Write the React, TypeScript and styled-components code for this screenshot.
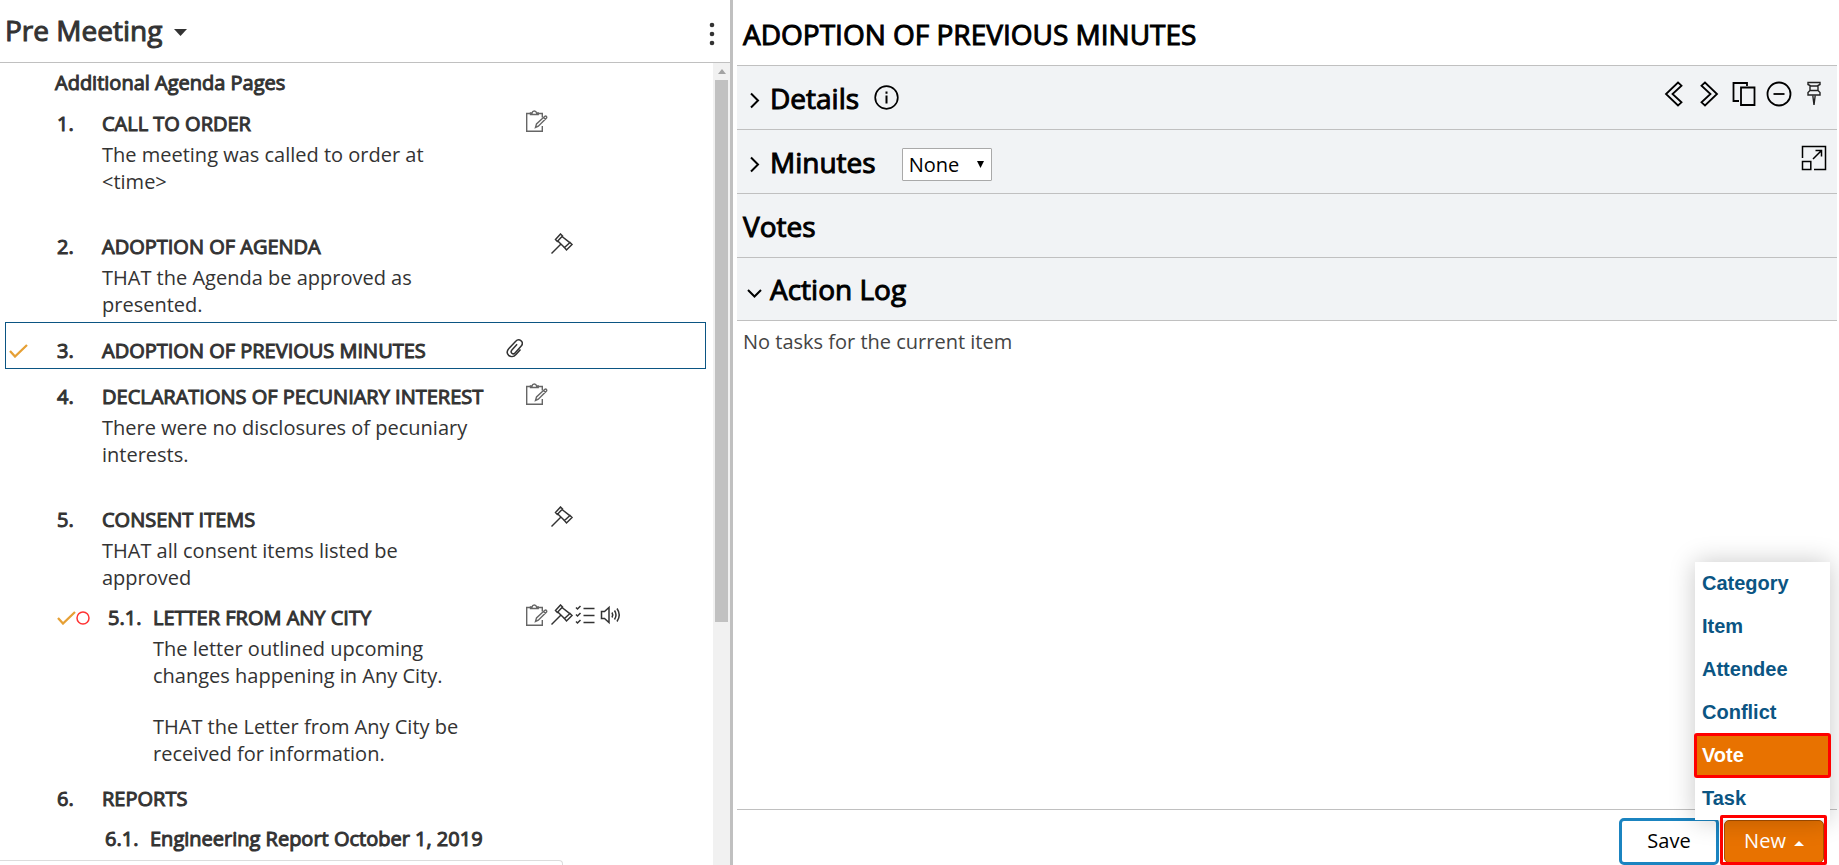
import React from 'react';
import styled, { createGlobalStyle, css } from 'styled-components';

const GlobalStyle = createGlobalStyle`
  *, *::before, *::after { box-sizing: border-box; }
  body {
    margin: 0;
    background: #fff;
    color: #333;
    font-family: 'Open Sans', 'Noto Sans', sans-serif;
    font-size: 20px;
    line-height: 27px;
  }
  button, select { font: inherit; color: inherit; }
  h1, h2, h3, p, ol, ul { margin: 0; padding: 0; font-weight: 400; font-size: inherit; }
  svg { display: block; }
`;

const emphasis = css`
  -webkit-text-stroke: 1px currentColor;
`;

const Page = styled.div`
  position: relative;
  display: grid;
  grid-template-columns: minmax(0, 733fr) minmax(0, 1106fr);
  height: 100vh;
  overflow: hidden;
`;

const AgendaPanel = styled.section`
  display: flex;
  flex-direction: column;
  min-height: 0;
  border-right: 3px solid #c0c0c0;
`;

const AgendaHeader = styled.header`
  flex: none;
  display: flex;
  align-items: center;
  justify-content: space-between;
  height: 63px;
  padding: 0 9px 0 5px;
  border-bottom: 1px solid #c0c0c0;
`;

const PlainButton = styled.button`
  display: flex;
  align-items: center;
  padding: 0;
  border: 0;
  background: none;
`;

const MeetingPicker = styled(PlainButton)`
  gap: 12px;
  padding-bottom: 2px;
  font-size: 28px;
  line-height: 38px;
  ${emphasis}

  svg { margin-top: 4px; }
`;

const MenuDots = styled(PlainButton)`
  padding-top: 6px;
`;

const AgendaBody = styled.div`
  flex: 1;
  display: flex;
  min-height: 0;
`;

const AgendaList = styled.ol`
  flex: 1;
  min-width: 0;
  overflow: hidden;
  padding: 6px 7px 0 5px;
  list-style: none;
`;

const ListHeading = styled.li`
  padding: 0 0 4px 50px;
  ${emphasis}
`;

const AgendaItem = styled.li<{ $level: number; $selected?: boolean }>`
  display: flex;
  align-items: flex-start;
  padding: ${(p) => (p.$level === 2 ? '9px 0 8px 52px' : '10px 0 4px')};
  ${(p) =>
    p.$selected &&
    css`
      margin-bottom: 4px;
      padding-top: 14px;
      border: 1px solid #0b5583;
    `}
`;

const Status = styled.span<{ $level: number; $selected?: boolean }>`
  flex: none;
  display: flex;
  align-items: center;
  height: 27px;
  min-width: ${(p) => (p.$level === 2 ? 48 : p.$selected ? 51 : 52)}px;
  padding: ${(p) => (p.$level === 2 ? '0 18px 0 0' : '0 0 0 3px')};
`;

const ItemNumber = styled.span`
  flex: none;
  width: 45px;
  ${emphasis}
`;

const ItemText = styled.div`
  flex: 1;
  min-width: 0;
`;

const ItemTitle = styled.h3`
  white-space: nowrap;
  ${emphasis}
`;

const ItemNote = styled.p<{ $spaced?: boolean }>`
  padding: 4px 16px 0 0;
  margin-bottom: ${(p) => (p.$spaced ? 24 : 0)}px;

  & + & { padding-top: 0; }
`;

const ItemIcons = styled.div`
  flex: none;
  display: grid;
  grid-template-columns: repeat(5, 25px);
  width: 206px;
  height: 22px;
  align-items: center;
`;

const IconSlot = styled.span<{ $slot: number }>`
  grid-row: 1;
  grid-column: ${(p) => p.$slot};
`;

const ScrollTrack = styled.div`
  flex: none;
  display: flex;
  flex-direction: column;
  align-items: center;
  width: 17px;
  background: #f1f1f1;
`;

const ScrollArrow = styled.span`
  display: flex;
  align-items: center;
  height: 17px;
`;

const ScrollThumb = styled.span`
  flex: 0.69 1 0;
  width: 13px;
  background: #c1c1c1;
`;

const DetailPanel = styled.main`
  display: flex;
  flex-direction: column;
  min-width: 0;
  padding: 0 2px 0 4px;
  color: #000;
`;

const DetailHeader = styled.header`
  flex: none;
  display: flex;
  align-items: center;
  height: 65px;
  padding: 3px 6px 0;
`;

const DetailTitle = styled.h1`
  font-size: 28px;
  line-height: 38px;
  white-space: nowrap;
  ${emphasis}
`;

const Section = styled.section`
  flex: none;
  display: flex;
  align-items: center;
  height: 64px;
  padding: 0 8px 0 6px;
  border-top: 1px solid #c0c0c0;
  background: #f1f3f5;

  &:last-of-type { height: 63px; }
`;

const SectionToggle = styled(PlainButton)`
  font-size: 28px;
  line-height: 38px;
  gap: 8px;
  color: #000;
  ${emphasis}

  svg { margin-top: 6px; }
`;

const SectionTitle = styled.h2`
  font-size: 28px;
  line-height: 38px;
  ${emphasis}
`;

const InfoButton = styled(PlainButton)`
  margin-left: 15px;
`;

const SelectWrap = styled.label`
  position: relative;
  margin: 6px 0 0 26px;

  svg {
    position: absolute;
    right: 8px;
    top: 13px;
    pointer-events: none;
  }
`;

const Select = styled.select`
  display: block;
  appearance: none;
  width: 90px;
  height: 33px;
  padding: 0 6px;
  border: 1px solid #a9a9a9;
  border-radius: 1px;
  background: #fff;
  color: #000;
`;

const Tools = styled.div`
  display: flex;
  align-items: center;
  margin: 0 -2px 8px auto;
`;

const ToolButton = styled(PlainButton)`
  width: 35px;
  height: 26px;
  justify-content: center;
`;

const LogText = styled.p`
  flex: 1;
  padding: 7px 6px;
  border-top: 1px solid #c0c0c0;
  color: #444;
`;

const Footer = styled.footer`
  flex: none;
  display: flex;
  justify-content: flex-end;
  align-items: flex-start;
  height: 56px;
  padding-right: 10px;
  border-top: 1px solid #c0c0c0;
`;

const SaveButton = styled.button`
  width: 100px;
  height: 47px;
  margin: 8px 1px 0 0;
  padding: 0 0 2px;
  border: 3px solid #1b84c0;
  border-radius: 5px;
  background: #fff;
  color: #000;
`;

const NewWrap = styled.div`
  position: relative;
  width: 107px;
  height: 50px;
  margin-top: 5px;
  padding: 5px 0 0 4px;

  &::after {
    content: '';
    position: absolute;
    inset: 0;
    z-index: 2;
    border: 3px solid #f00;
    border-radius: 2px;
    pointer-events: none;
  }
`;

const NewButton = styled.button`
  display: flex;
  align-items: center;
  justify-content: center;
  gap: 8px;
  width: 100px;
  height: 43px;
  padding: 0 0 2px;
  border: 1px solid #a85000;
  border-radius: 5px;
  background: #e87200;
  color: #fff;

  svg { margin-top: 6px; }
`;

const Menu = styled.ul`
  position: absolute;
  right: -3px;
  bottom: 45px;
  z-index: 1;
  width: 135px;
  list-style: none;
  background: #fff;
  box-shadow: 0 0 24px rgba(0, 0, 0, 0.22);
`;

const MenuButton = styled.button<{ $active?: boolean }>`
  display: block;
  width: 100%;
  height: 43px;
  padding: 0 7px;
  border: 0;
  background: #fff;
  color: #0b5583;
  font: bold 20px/27px 'Liberation Sans', Arial, sans-serif;
  text-align: left;
  ${(p) =>
    p.$active &&
    css`
      position: relative;
      background: #e87200;
      color: #fff;
      outline: 3px solid #f00;
      outline-offset: -2px;
      border-radius: 2px;
    `}
`;

const BrowserStatus = styled.div`
  position: absolute;
  left: 0;
  bottom: 0;
  width: 563px;
  height: 5px;
  border: solid #dcdcdc;
  border-width: 1px 1px 0 0;
  border-top-right-radius: 4px;
  background: #fff;
`;

const stroke = { fill: 'none', stroke: 'currentColor', strokeWidth: 1.5 } as const;

const CheckIcon = () => (
  <svg width="19" height="14" viewBox="0 0 19 14" fill="none" stroke="#e6a035" strokeWidth="2.300">
    <path d="M1 7l5 5.500L18 1" />
  </svg>
);

const CircleIcon = () => (
  <svg width="14" height="14" viewBox="0 0 14 14" fill="none" stroke="#f33" strokeWidth="1.500">
    <circle cx="7" cy="7" r="6" />
  </svg>
);

const ClipIcon = () => (
  <svg width="24" height="22" viewBox="0 0 24 22" {...stroke}>
    <path d="M21.500 12.500l-4.500 5c-2.500 2.700-5.500 2.500-7.300.9-1.900-1.800-1.800-4.600.2-6.800l6.600-7.200c1.700-1.800 4-1.900 5.600-.6 1.500 1.400 1.500 3.700-.1 5.500l-6 6.600c-1 1.100-2.300 1.100-3.200.3-.9-.8-.9-2 .1-3.200l5.200-5.700" />
  </svg>
);

const NoteIcon = () => (
  <svg width="24" height="22" viewBox="0 0 24 22" fill="none" stroke="#666" strokeWidth="1.400">
    <path d="M6 3.500H1.700v17.800h15.600V16M12.500 3.500h4.800v4" />
    <path d="M5.500 4.500V3H7c.3-1.300 1-2 2.300-2s2 .7 2.300 2h1.600v1.500z" />
    <path d="M10.500 17.500l1-3.500 8.300-7.700c1.400-.8 2.500.5 1.700 1.800l-8.200 8.100zM18.500 7.500l2 2" />
  </svg>
);

const GavelIcon = () => (
  <svg width="24" height="22" viewBox="0 0 24 22" {...stroke} stroke="#333">
    <path d="M1.500 20.500l9.500-9.500" />
    <path d="M5.500 6.500l5-5.500 2 2-5.200 5.500zM14.500 14.500l5.500-5 2 2-5.500 5.500z" />
    <path d="M7.800 8l6.700 6.500M12 3.500l7.800 6.200" />
  </svg>
);

const TaskIcon = () => (
  <svg width="24" height="22" viewBox="0 0 24 22" {...stroke} stroke="#333">
    <path d="M8.500 4.500h11M8.500 11.500h11M8.500 18.500h11" />
    <path d="M1 3.500l1.500 1.500L5.500 2M1 10.500l1.500 1.500 3-3M1 17.500l1.500 1.500 3-3" />
  </svg>
);

const SoundIcon = () => (
  <svg width="24" height="22" viewBox="0 0 24 22" {...stroke} stroke="#333">
    <path d="M1.500 7.500h3L9 3.500v15l-4.500-4h-3z" />
    <path d="M12 8.500q1.500 2.500 0 5M14.500 6.500q3 4.500 0 9M17 4.500q4.500 6.500 0 13" />
  </svg>
);

const ArrowDown = () => (
  <svg width="13" height="7" viewBox="0 0 13 7" fill="currentColor">
    <path d="M0 0h13L6.500 7z" />
  </svg>
);

const iconSet = {
  clip: { slot: 1, Icon: ClipIcon },
  note: { slot: 2, Icon: NoteIcon },
  gavel: { slot: 3, Icon: GavelIcon },
  task: { slot: 4, Icon: TaskIcon },
  sound: { slot: 5, Icon: SoundIcon },
};

type Item = {
  number: string;
  title: string;
  level: 1 | 2;
  notes?: string[];
  spaced?: boolean;
  selected?: boolean;
  status?: ('check' | 'circle')[];
  icons?: (keyof typeof iconSet)[];
};

const items: Item[] = [
  { number: '1.', title: 'CALL TO ORDER', level: 1, notes: ['The meeting was called to order at <time>'], spaced: true, icons: ['note'] },
  { number: '2.', title: 'ADOPTION OF AGENDA', level: 1, notes: ['THAT the Agenda be approved as presented.'], icons: ['gavel'] },
  { number: '3.', title: 'ADOPTION OF PREVIOUS MINUTES', level: 1, selected: true, status: ['check'], icons: ['clip'] },
  { number: '4.', title: 'DECLARATIONS OF PECUNIARY INTEREST', level: 1, notes: ['There were no disclosures of pecuniary interests.'], spaced: true, icons: ['note'] },
  { number: '5.', title: 'CONSENT ITEMS', level: 1, notes: ['THAT all consent items listed be approved'], icons: ['gavel'] },
  {
    number: '5.1.',
    title: 'LETTER FROM ANY CITY',
    level: 2,
    status: ['check', 'circle'],
    notes: ['The letter outlined upcoming changes happening in Any City.', 'THAT the Letter from Any City be received for information.'],
    icons: ['note', 'gavel', 'task', 'sound'],
  },
  { number: '6.', title: 'REPORTS', level: 1 },
  { number: '6.1.', title: 'Engineering Report October 1, 2019', level: 2 },
];

const menuItems = ['Category', 'Item', 'Attendee', 'Conflict', 'Vote', 'Task'];

export default function App() {
  return (
    <>
      <GlobalStyle />
      <Page>
        <AgendaPanel>
          <AgendaHeader>
            <MeetingPicker type="button">
              Pre Meeting
              <ArrowDown />
            </MeetingPicker>
            <MenuDots type="button" aria-label="More options">
              <svg width="18" height="24" viewBox="0 0 18 24" fill="#333">
                <circle cx="9" cy="3" r="2.300" />
                <circle cx="9" cy="12" r="2.300" />
                <circle cx="9" cy="21" r="2.300" />
              </svg>
            </MenuDots>
          </AgendaHeader>
          <AgendaBody>
            <AgendaList>
              <ListHeading>Additional Agenda Pages</ListHeading>
              {items.map((item) => (
                <AgendaItem key={item.number} $level={item.level} $selected={item.selected}>
                  <Status $level={item.level} $selected={item.selected}>
                    {item.status?.map((s) => (s === 'check' ? <CheckIcon key={s} /> : <CircleIcon key={s} />))}
                  </Status>
                  <ItemNumber>{item.number}</ItemNumber>
                  <ItemText>
                    <ItemTitle>{item.title}</ItemTitle>
                    {item.notes?.map((note, i) => (
                      <ItemNote key={note} $spaced={item.spaced || i < item.notes!.length - 1}>
                        {note}
                      </ItemNote>
                    ))}
                  </ItemText>
                  <ItemIcons>
                    {item.icons?.map((name) => {
                      const { slot, Icon } = iconSet[name];
                      return (
                        <IconSlot key={name} $slot={slot}>
                          <Icon />
                        </IconSlot>
                      );
                    })}
                  </ItemIcons>
                </AgendaItem>
              ))}
            </AgendaList>
            <ScrollTrack aria-hidden="true">
              <ScrollArrow>
                <svg width="8" height="5" viewBox="0 0 8 5" fill="#a3a3a3">
                  <path d="M0 5h8L4 0z" />
                </svg>
              </ScrollArrow>
              <ScrollThumb />
            </ScrollTrack>
          </AgendaBody>
        </AgendaPanel>

        <DetailPanel>
          <DetailHeader>
            <DetailTitle>ADOPTION OF PREVIOUS MINUTES</DetailTitle>
          </DetailHeader>
          <Section>
            <SectionToggle type="button" aria-expanded="false">
              <svg width="19" height="17" viewBox="0 0 19 17" fill="none" stroke="#000" strokeWidth="2">
                <path d="M8 1.500l7 7-7 7" />
              </svg>
              Details
            </SectionToggle>
            <InfoButton type="button" aria-label="Information">
              <svg width="25" height="25" viewBox="0 0 25 25" fill="none" stroke="#000" strokeWidth="1.700">
                <circle cx="12.500" cy="12.500" r="11.300" />
                <path d="M12.500 10.500v8M12.500 6.500v2.200" strokeWidth="2" />
              </svg>
            </InfoButton>
            <Tools>
              <ToolButton type="button" aria-label="Previous item">
                <svg width="26" height="26" viewBox="0 0 26 26" {...stroke} strokeWidth="1.800">
                  <path d="M17 1.500l3.500 3.200L11.500 13l9 8.300-3.500 3.200L5 13z" />
                </svg>
              </ToolButton>
              <ToolButton type="button" aria-label="Next item">
                <svg width="26" height="26" viewBox="0 0 26 26" {...stroke} strokeWidth="1.800">
                  <path d="M9 1.500L5.500 4.700l9 8.300-9 8.300L9 24.500 21 13z" />
                </svg>
              </ToolButton>
              <ToolButton type="button" aria-label="Copy">
                <svg width="26" height="26" viewBox="0 0 26 26" {...stroke} strokeWidth="1.800">
                  <path d="M8 20H2.500V2H16v3" />
                  <path d="M10 6.500h13.500V24H10z" />
                </svg>
              </ToolButton>
              <ToolButton type="button" aria-label="Remove">
                <svg width="26" height="26" viewBox="0 0 26 26" {...stroke} strokeWidth="1.800">
                  <circle cx="13" cy="13" r="11.500" />
                  <path d="M7.500 13h11" />
                </svg>
              </ToolButton>
              <ToolButton type="button" aria-label="Pin">
                <svg width="26" height="26" viewBox="0 0 26 26" fill="none" stroke="#222" strokeWidth="1.400">
                  <path d="M7 1.500h12v2l-2 1v5l2 2v2.500H7v-2.500l2-2v-5l-2-1zM9 5h8M9 9.500h8" />
                  <path d="M11.800 14.500L13 24l1.200-9.500" />
                </svg>
              </ToolButton>
            </Tools>
          </Section>
          <Section>
            <SectionToggle type="button" aria-expanded="false">
              <svg width="19" height="17" viewBox="0 0 19 17" fill="none" stroke="#000" strokeWidth="2">
                <path d="M8 1.500l7 7-7 7" />
              </svg>
              Minutes
            </SectionToggle>
            <SelectWrap>
              <Select aria-label="Minutes type" defaultValue="None">
                <option>None</option>
              </Select>
              <svg width="7" height="7" viewBox="0 0 7 7" fill="#000">
                <path d="M0 0h7L3.500 7z" />
              </svg>
            </SelectWrap>
            <Tools>
              <ToolButton type="button" aria-label="Expand">
                <svg width="26" height="26" viewBox="0 0 26 26" {...stroke}>
                  <path d="M1.500 13V1.500h23v23H13" />
                  <path d="M1.500 16.500h8.300v8H1.500zM12 14l8.500-8.500M14.500 5.500h6v6" />
                </svg>
              </ToolButton>
            </Tools>
          </Section>
          <Section>
            <SectionTitle>Votes</SectionTitle>
          </Section>
          <Section>
            <SectionToggle type="button" aria-expanded="true">
              <svg width="19" height="17" viewBox="0 0 19 17" fill="none" stroke="#000" strokeWidth="2">
                <path d="M5 6l6.500 6.500L18 6" />
              </svg>
              Action Log
            </SectionToggle>
          </Section>
          <LogText>No tasks for the current item</LogText>
          <Footer>
            <SaveButton type="button">Save</SaveButton>
            <NewWrap>
              <NewButton type="button" aria-haspopup="menu" aria-expanded="true">
                New
                <svg width="10" height="5" viewBox="0 0 10 5" fill="#fff">
                  <path d="M0 5h10L5 0z" />
                </svg>
              </NewButton>
              <Menu>
                {menuItems.map((label) => (
                  <li key={label}>
                    <MenuButton type="button" $active={label === 'Vote'}>
                      {label}
                    </MenuButton>
                  </li>
                ))}
              </Menu>
            </NewWrap>
          </Footer>
        </DetailPanel>
        <BrowserStatus />
      </Page>
    </>
  );
}
